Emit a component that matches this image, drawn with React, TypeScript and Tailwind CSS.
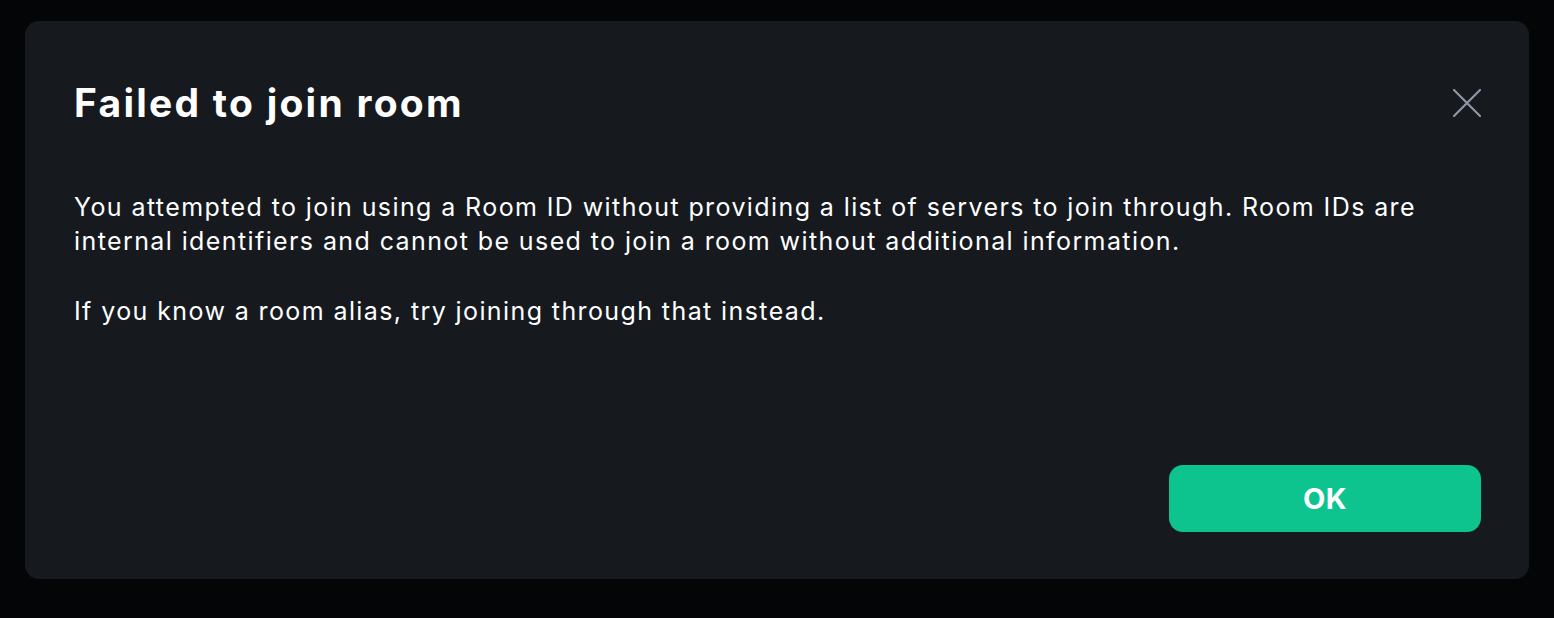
import React from "react";

export default function App() {
  return (
    <div
      className="w-[1554px] h-[618px] bg-[#040507] pt-[21px] px-[25px]"
      style={{ fontFamily: "Inter, 'Noto Sans', sans-serif" }}
    >
      <div className="relative h-[558px] rounded-[14px] bg-[#16191e] pl-[49px] pr-[48px] pt-[59px] pb-[47px] flex flex-col">
        <button
          aria-label="Close"
          className="absolute right-[47px] top-[67px] w-[30px] h-[30px] flex items-center justify-center"
        >
          <svg width="30" height="30" viewBox="0 0 30 30" fill="none">
            <path d="M2 2 L28 28 M28 2 L2 28" stroke="#8d97a5" strokeWidth="2.2" strokeLinecap="round" />
          </svg>
        </button>
        <h1 className="text-[39px] leading-[46px] font-bold text-white tracking-[2.25px]">
          Failed to join room
        </h1>
        <div className="mt-[64px] text-[25px] leading-[34px] text-white tracking-[1.4px]">
          <p>
            You attempted to join using a Room ID without providing a list of servers to join through. Room IDs are
            internal identifiers and cannot be used to join a room without additional information.
          </p>
          <p className="mt-[36px]">If you know a room alias, try joining through that instead.</p>
        </div>
        <div className="mt-auto flex justify-end">
          <button className="w-[312px] h-[67px] rounded-[14px] bg-[#0dc48f] text-white text-[29px] font-bold tracking-[0.5px]">
            OK
          </button>
        </div>
      </div>
    </div>
  );
}
